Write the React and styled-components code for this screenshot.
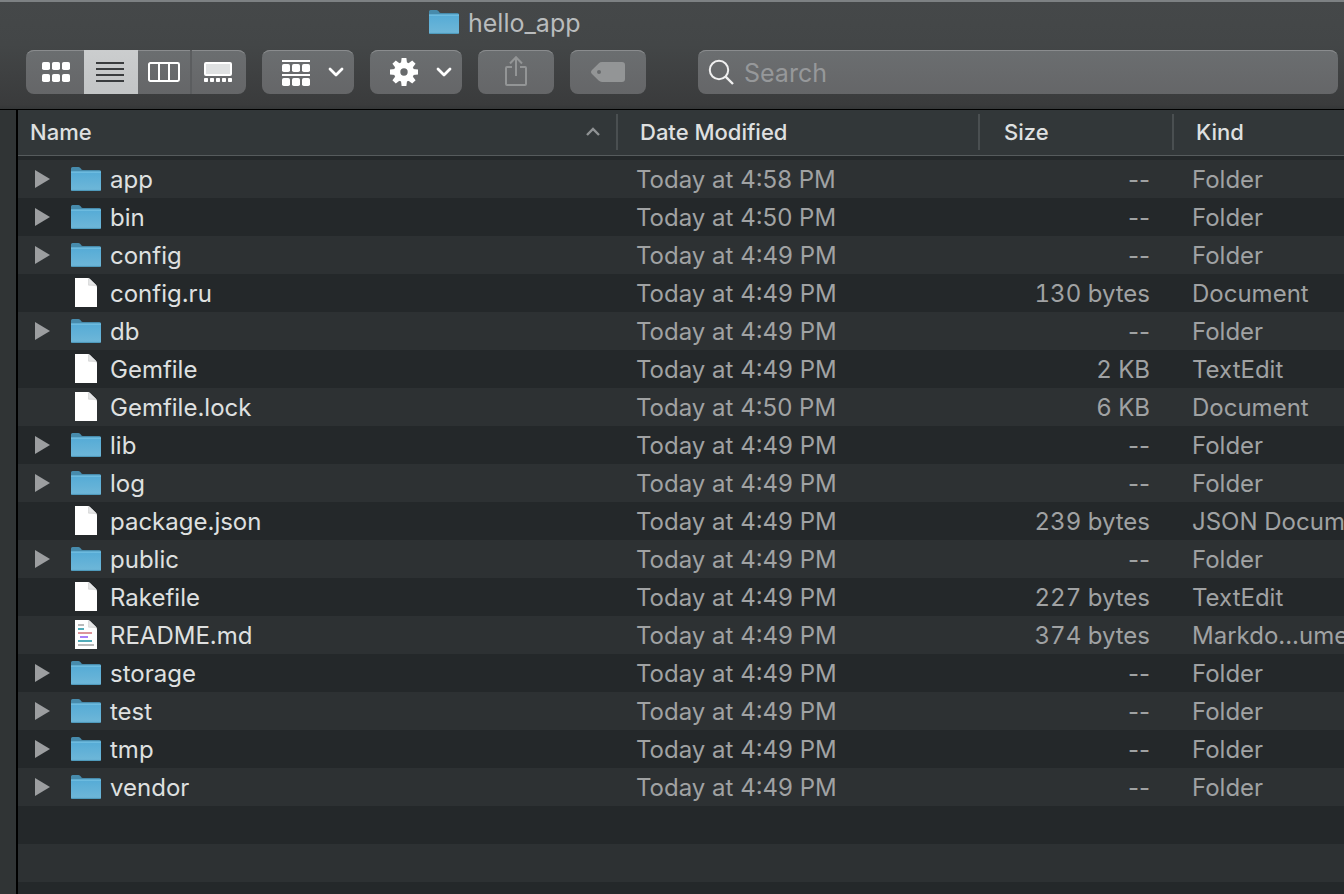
import React from "react";
import styled, { createGlobalStyle, css } from "styled-components";

const GlobalStyle = createGlobalStyle`
  * { box-sizing: border-box; }
  body {
    margin: 0;
    background: #24282a;
    font-family: Inter, "Liberation Sans", sans-serif;
    font-size: 24px;
    color: #dfe0e0;
  }
  button, input {
    font: inherit;
    color: inherit;
    border: 0;
    margin: 0;
    padding: 0;
    background: none;
  }
  svg { display: block; flex: none; }
`;

const Window = styled.div`
  display: flex;
  flex-direction: column;
  height: 100vh;
  overflow: hidden;
`;

const Chrome = styled.header`
  flex: none;
  border-top: 2px solid #7d8183;
  border-bottom: 1px solid #000;
  background: linear-gradient(#454849, #434647 40%, #3a3b3c 96%, #343637);
`;

const TitleBar = styled.div`
  display: flex;
  align-items: center;
  gap: 9px;
  height: 42px;
  padding: 0 0 2px 429px;
`;

const Title = styled.h1`
  margin: 0;
  padding-top: 2px;
  font-size: 25px;
  line-height: 30px;
  font-weight: 400;
  color: #b9bcbd;
`;

const Toolbar = styled.div`
  display: flex;
  gap: 16px;
  padding: 6px 6px 15px 26px;
`;

const surface = css`
  height: 44px;
  border-radius: 8px;
  background: linear-gradient(#6b6e70, #656668);
  box-shadow: inset 0 2px 0 -1px #8a8c8e;
`;

const Segments = styled.div`
  ${surface}
  display: flex;
  overflow: hidden;
`;

const Segment = styled.button`
  display: flex;
  align-items: center;
  justify-content: center;
  width: ${(p) => (p.$wide ? 58 : 54)}px;
  padding-left: ${(p) => (p.$wide ? 4 : 0)}px;
  border-right: 2px solid ${(p) => (p.$divider ? "#5b5d5f" : "transparent")};
  color: ${(p) => (p.$active ? "#3a3c3e" : "#fff")};
  background: ${(p) => (p.$active ? "linear-gradient(#cbcdce, #c3c5c6) border-box" : "none")};
`;

const ToolButton = styled.button`
  ${surface}
  display: flex;
  align-items: center;
  justify-content: center;
  width: 76px;
  color: #939596;
`;

const MenuButton = styled.button`
  ${surface}
  display: flex;
  align-items: center;
  justify-content: space-between;
  width: 92px;
  padding: 0 10px 0 20px;
  color: #fff;
`;

const SearchField = styled.label`
  ${surface}
  display: flex;
  flex: 1;
  align-items: center;
  gap: 9px;
  margin-left: 36px;
  padding: 0 10px;
  color: #f0f0f0;
`;

const SearchInput = styled.input`
  flex: 1;
  min-width: 0;
  padding-top: 2px;
  font-size: 25px;
  line-height: 30px;
  outline: 0;
  appearance: none;
  &::placeholder { color: #96989a; opacity: 1; }
`;

const Body = styled.div`
  display: flex;
  flex: 1;
  min-height: 0;
`;

const SidebarEdge = styled.aside`
  flex: none;
  width: 18px;
  border-right: 2px solid #000;
  background: #303435;
`;

const List = styled.main`
  display: flex;
  flex-direction: column;
  flex: 1;
  min-width: 0;
  overflow: hidden;
`;

const Table = styled.table`
  width: 100%;
  table-layout: fixed;
  border-collapse: separate;
  border-spacing: 0;
`;

const Col = styled.col`
  width: ${(p) => p.$width};
`;

const HeadCell = styled.th`
  height: 46px;
  padding: 0 0 2px ${(p) => p.$indent}px;
  border-bottom: 1px solid #565b5d;
  background: #323739;
  text-align: left;
  font-size: 22px;
  font-weight: 500;
`;

const HeadInner = styled.div`
  display: flex;
  align-items: center;
  justify-content: space-between;
  height: 36px;
  padding-right: 16px;
  border-right: 2px solid ${(p) => (p.$last ? "transparent" : "#4a4f51")};
`;

const SortButton = styled.button`
  line-height: 28px;
`;

const Rows = styled.tbody`
  &::before {
    content: "";
    display: table-row;
    height: 4px;
  }
`;

const Row = styled.tr`
  height: 38px;
  background: ${(p) => (p.$light ? "#2d3133" : "#24282a")};
`;

const Cell = styled.td`
  padding: 2px 24px 0 18px;
  overflow: hidden;
  white-space: nowrap;
  line-height: 36px;
  color: #a0a2a3;
`;

const SizeCell = styled(Cell)`
  text-align: right;
  font-variant-numeric: ${(p) => (p.$empty ? "normal" : "tabular-nums")};
`;

const KindCell = styled(Cell)`
  padding-right: 0;
`;

const NameCell = styled.td`
  padding: 0 0 0 17px;
`;

const NameLayout = styled.div`
  display: flex;
  align-items: center;
  height: 38px;
`;

const FileName = styled.span`
  padding-top: 2px;
  line-height: 36px;
  color: #dfe0e0;
`;

const Disclosure = styled.span`
  width: 34px;
`;

const DisclosureButton = styled.button`
  display: block;
  color: #9c9ea0;
`;

const IconSlot = styled.span`
  display: flex;
  justify-content: center;
  width: 34px;
  margin-right: 7px;
`;

const EmptyRows = styled.div`
  flex: 1;
  background: repeating-linear-gradient(#24282a 0 38px, #2d3133 38px 76px);
`;

const FolderIcon = () => (
  <svg width="30" height="24" viewBox="0 0 30 24" aria-hidden="true">
    <defs>
      <linearGradient id="folderFront" x1="0" y1="0" x2="0" y2="1">
        <stop offset="0" stopColor="#55abd6" />
        <stop offset="1" stopColor="#6fb7d8" />
      </linearGradient>
    </defs>
    <path d="M0 1.5Q0 0 1.5 0H7.5Q9 0 9.8 1.5Q10.6 3 12 3H28.5Q30 3 30 4.5V10H0Z" fill="#478bac" />
    <path d="M0 4.6H30V22.4Q30 24 28.4 24H1.6Q0 24 0 22.4Z" fill="url(#folderFront)" />
    <path d="M0 5.1H30" stroke="#7cc6e6" />
    <path d="M0.6 23.4H29.4" stroke="#4c97b9" />
  </svg>
);

const FileIcon = ({ lines }) => (
  <svg width="22" height="30" viewBox="0 0 22 30" aria-hidden="true">
    <path d="M0 0H12.5Q14 0 15.2 1.2L20.8 6.8Q22 8 22 9.5V29H0Z" fill="#fff" />
    <path d="M12.5 0Q14.4 0.6 13.8 6.9Q20.6 6.8 22 9.5Q22 8 20.8 6.8L15.2 1.2Q14 0 12.5 0Z" fill="#e6e7e8" />
    <path d="M13.6 1V7.2H20.6" fill="none" stroke="#cfd0d1" strokeWidth="0.8" />
    {lines && (
      <g strokeWidth="2">
        <path d="M3 5H9" stroke="#b9babb" />
        <path d="M3 9H9" stroke="#52acb9" />
        <path d="M3 13H17" stroke="#dc959b" />
        <path d="M5 17H13" stroke="#a97ff8" />
        <path d="M3 21H17" stroke="#52acb9" />
        <path d="M3 25H19" stroke="#b9babb" />
      </g>
    )}
  </svg>
);

const TriangleIcon = () => (
  <svg width="15" height="18" viewBox="0 0 15 18" aria-hidden="true">
    <path d="M0 0L15 9L0 18Z" fill="currentColor" />
  </svg>
);

const Squares = ({ y }) =>
  [0, 10, 20].map((x) => <rect key={x} x={x} y={y} width="8" height="8" rx="1.8" />);

const GridIcon = () => (
  <svg width="28" height="20" fill="currentColor" aria-hidden="true">
    <Squares y={0} />
    <Squares y={12} />
  </svg>
);

const LinesIcon = () => (
  <svg width="28" height="20" fill="currentColor" aria-hidden="true">
    {[0, 6, 12, 18].map((y) => <rect key={y} y={y} width="28" height="2" />)}
  </svg>
);

const ColumnsIcon = () => (
  <svg width="32" height="20" fill="none" stroke="currentColor" strokeWidth="2" aria-hidden="true">
    <rect x="1" y="1" width="30" height="18" rx="1.4" />
    <path d="M11 1V19M21 1V19" />
  </svg>
);

const GalleryIcon = () => (
  <svg width="28" height="20" fill="currentColor" aria-hidden="true">
    <rect x="1" y="1" width="26" height="12" rx="1" fill="#dfe1e2" stroke="currentColor" strokeWidth="2" />
    {[0, 6, 12, 18, 24].map((x) => <rect key={x} x={x} y="16" width="4" height="4" rx="0.8" />)}
  </svg>
);

const GroupIcon = () => (
  <svg width="28" height="28" fill="currentColor" aria-hidden="true">
    <rect y="2" width="28" height="2" />
    <Squares y={6} />
    <rect y="16" width="28" height="2" />
    <Squares y={20} />
  </svg>
);

const GearIcon = () => (
  <svg width="28" height="28" viewBox="-14 -14 28 28" aria-hidden="true">
    <circle r="6.9" fill="none" stroke="currentColor" strokeWidth="6.4" />
    {[0, 45, 90, 135, 180, 225, 270, 315].map((a) => (
      <path key={a} d="M-3 -9L-2.4 -14H2.4L3 -9Z" fill="currentColor" transform={`rotate(${a})`} />
    ))}
  </svg>
);

const ChevronIcon = () => (
  <svg width="16" height="10" viewBox="0 0 16 10" fill="none" stroke="currentColor" strokeWidth="2.8" strokeLinecap="round" strokeLinejoin="round" aria-hidden="true">
    <path d="M2 2L8 8L14 2" />
  </svg>
);

const ShareIcon = () => (
  <svg width="22" height="32" viewBox="0 0 22 32" fill="none" stroke="currentColor" strokeWidth="2" aria-hidden="true">
    <path d="M7 11H2Q1 11 1 12V28Q1 29 2 29H20Q21 29 21 28V12Q21 11 20 11H15" />
    <path d="M11 20V2M5 7.5L11 1.2L17 7.5" />
  </svg>
);

const TagIcon = () => (
  <svg width="34" height="20" viewBox="0 0 34 20" aria-hidden="true">
    <path
      d="M11 0H31Q34 0 34 3V17Q34 20 31 20H11Q9 20 7.6 18.6L1 12Q-1 10 1 8L7.6 1.4Q9 0 11 0ZM8 8A2 2 0 1 0 8 12A2 2 0 1 0 8 8Z"
      fill="currentColor"
      fillRule="evenodd"
    />
  </svg>
);

const SearchIcon = () => (
  <svg width="27" height="26" viewBox="0 0 27 26" fill="none" stroke="currentColor" strokeWidth="2" aria-hidden="true">
    <circle cx="11" cy="11" r="9.2" />
    <path d="M17.6 17.6L25 25" strokeWidth="2.4" />
  </svg>
);

const SortIcon = () => (
  <svg width="14" height="9" viewBox="0 0 14 9" fill="none" stroke="#8f9294" strokeWidth="2.4" aria-hidden="true">
    <path d="M1 8L7 2L13 8" />
  </svg>
);

const FILES = [
  ["app", "4:58"],
  ["bin", "4:50"],
  ["config", "4:49"],
  ["config.ru", "4:49", "130 bytes", "Document"],
  ["db", "4:49"],
  ["Gemfile", "4:49", "2 KB", "TextEdit"],
  ["Gemfile.lock", "4:50", "6 KB", "Document"],
  ["lib", "4:49"],
  ["log", "4:49"],
  ["package.json", "4:49", "239 bytes", "JSON Document"],
  ["public", "4:49"],
  ["Rakefile", "4:49", "227 bytes", "TextEdit"],
  ["README.md", "4:49", "374 bytes", "Markdo...ument"],
  ["storage", "4:49"],
  ["test", "4:49"],
  ["tmp", "4:49"],
  ["vendor", "4:49"],
];

const COLUMNS = [
  { label: "Name", width: "600px", indent: 12, sorted: true },
  { label: "Date Modified", width: "362px", indent: 22 },
  { label: "Size", width: "194px", indent: 24 },
  { label: "Kind", width: "auto", indent: 22, last: true },
];

function FileRow({ name, time, size, kind, light }) {
  const isFolder = !kind;
  return (
    <Row $light={light}>
      <NameCell>
        <NameLayout>
          <Disclosure>
            {isFolder && (
              <DisclosureButton type="button" aria-label={`Expand ${name}`}>
                <TriangleIcon />
              </DisclosureButton>
            )}
          </Disclosure>
          <IconSlot>{isFolder ? <FolderIcon /> : <FileIcon lines={name.endsWith(".md")} />}</IconSlot>
          <FileName>{name}</FileName>
        </NameLayout>
      </NameCell>
      <Cell>Today at {time} PM</Cell>
      <SizeCell $empty={!size}>{size || "--"}</SizeCell>
      <KindCell>{kind || "Folder"}</KindCell>
    </Row>
  );
}

export default function App() {
  return (
    <Window>
      <GlobalStyle />
      <Chrome>
        <TitleBar>
          <FolderIcon />
          <Title>hello_app</Title>
        </TitleBar>
        <Toolbar>
          <Segments role="group" aria-label="View">
            <Segment type="button" aria-label="Icons" $wide><GridIcon /></Segment>
            <Segment type="button" aria-label="List" aria-pressed="true" $active><LinesIcon /></Segment>
            <Segment type="button" aria-label="Columns" $divider><ColumnsIcon /></Segment>
            <Segment type="button" aria-label="Gallery"><GalleryIcon /></Segment>
          </Segments>
          <MenuButton type="button" aria-label="Group by" aria-haspopup="menu"><GroupIcon /><ChevronIcon /></MenuButton>
          <MenuButton type="button" aria-label="Actions" aria-haspopup="menu"><GearIcon /><ChevronIcon /></MenuButton>
          <ToolButton type="button" aria-label="Share"><ShareIcon /></ToolButton>
          <ToolButton type="button" aria-label="Edit tags"><TagIcon /></ToolButton>
          <SearchField>
            <SearchIcon />
            <SearchInput type="search" placeholder="Search" aria-label="Search" />
          </SearchField>
        </Toolbar>
      </Chrome>
      <Body>
        <SidebarEdge />
        <List>
          <Table>
            <colgroup>
              {COLUMNS.map((c) => <Col key={c.label} $width={c.width} />)}
            </colgroup>
            <thead>
              <tr>
                {COLUMNS.map((c) => (
                  <HeadCell key={c.label} scope="col" $indent={c.indent} aria-sort={c.sorted ? "ascending" : undefined}>
                    <HeadInner $last={c.last}>
                      <SortButton type="button">{c.label}</SortButton>
                      {c.sorted && <SortIcon />}
                    </HeadInner>
                  </HeadCell>
                ))}
              </tr>
            </thead>
            <Rows>
              {FILES.map(([name, time, size, kind], i) => (
                <FileRow key={name} name={name} time={time} size={size} kind={kind} light={i % 2 === 0} />
              ))}
            </Rows>
          </Table>
          <EmptyRows />
        </List>
      </Body>
    </Window>
  );
}
